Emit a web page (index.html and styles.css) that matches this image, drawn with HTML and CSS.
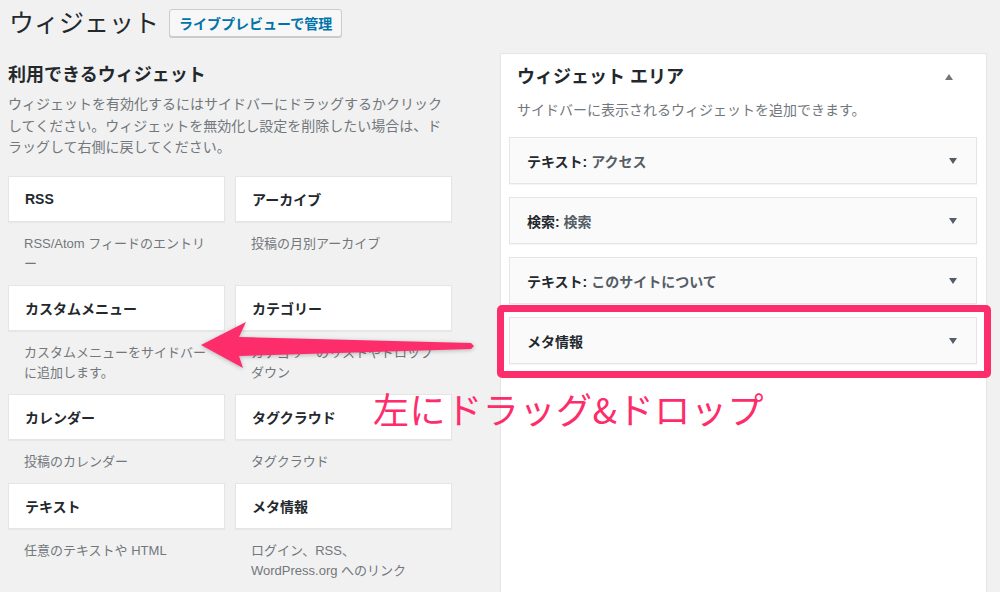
FILE: index.html
```html
<!DOCTYPE html>
<html lang="ja">

<head>
    <meta charset="UTF-8">
    <meta name="viewport" content="width=device-width, initial-scale=1.0">
    <title>ウィジェット</title>
    <link rel="stylesheet" href="styles.css">
</head>

<body>

    <div class="wrap">
        <div class="page-head">
            <h1>ウィジェット</h1>
            <a class="btn" href="#">ライブプレビューで管理</a>
        </div>

        <div class="columns">
            <div class="available">
                <h2>利用できるウィジェット</h2>
                <p class="intro">ウィジェットを有効化するにはサイドバーにドラッグするかクリックしてください。ウィジェットを無効化し設定を削除したい場合は、ドラッグして右側に戻してください。</p>

                <div class="widget-list">
                    <div class="item">
                        <div class="card">RSS</div>
                        <p class="desc">RSS/Atom フィードのエントリー</p>
                    </div>
                    <div class="item">
                        <div class="card">アーカイブ</div>
                        <p class="desc">投稿の月別アーカイブ</p>
                    </div>
                    <div class="item">
                        <div class="card">カスタムメニュー</div>
                        <p class="desc">カスタムメニューをサイドバーに追加します。</p>
                    </div>
                    <div class="item">
                        <div class="card">カテゴリー</div>
                        <p class="desc">カテゴリーのリストやドロップダウン</p>
                    </div>
                    <div class="item">
                        <div class="card">カレンダー</div>
                        <p class="desc">投稿のカレンダー</p>
                    </div>
                    <div class="item">
                        <div class="card">タグクラウド</div>
                        <p class="desc">タグクラウド</p>
                    </div>
                    <div class="item">
                        <div class="card">テキスト</div>
                        <p class="desc">任意のテキストや HTML</p>
                    </div>
                    <div class="item">
                        <div class="card">メタ情報</div>
                        <p class="desc">ログイン、RSS、WordPress.org へのリンク</p>
                    </div>
                </div>
            </div>

            <div class="sidebar">
                <div class="sidebar-head">
                    <h3>ウィジェット エリア</h3>
                    <span class="arrow-up"></span>
                </div>
                <p class="sidebar-desc">サイドバーに表示されるウィジェットを追加できます。</p>

                <div class="area-widget">
                    <span>テキスト: <em>アクセス</em></span>
                    <span class="arrow-down"></span>
                </div>
                <div class="area-widget">
                    <span>検索: <em>検索</em></span>
                    <span class="arrow-down"></span>
                </div>
                <div class="area-widget">
                    <span>テキスト: <em>このサイトについて</em></span>
                    <span class="arrow-down"></span>
                </div>
                <div class="area-widget">
                    <span>メタ情報</span>
                    <span class="arrow-down"></span>
                </div>
            </div>
        </div>
    </div>

    <!-- annotations drawn over the screenshot -->
    <div class="mark-box"></div>
    <svg class="mark-arrow" width="1000" height="592" viewBox="0 0 1000 592">
        <polygon points="201,345 246,322 239,337 471,343 474,346 471,349 239,356 243,368" fill="#fd2d6c" />
    </svg>
    <div class="mark-text">左にドラッグ&amp;ドロップ</div>

</body>

</html>
```

FILE: styles.css
```css
* {
    margin: 0;
    padding: 0;
    box-sizing: border-box;
}

body {
    font-family: 'Liberation Sans', 'Noto Sans CJK JP', sans-serif;
    background: #f1f1f1;
    color: #444;
    overflow: hidden;
    height: 592px;
    position: relative;
}

.wrap {
    padding-left: 8px;
}

.page-head {
    display: flex;
    align-items: center;
    padding-top: 8px;
    height: 37px;
}

.page-head h1 {
    font-size: 25px;
    font-weight: 400;
    color: #23282d;
    line-height: 28px;
    margin-left: 1px;
}

.btn {
    margin-left: 10px;
    height: 28px;
    padding: 0 9px;
    display: inline-flex;
    align-items: center;
    font-size: 14px;
    font-weight: 700;
    color: #0073aa;
    text-decoration: none;
    background: #f7f7f7;
    border: 1px solid #ccc;
    border-radius: 3px;
    box-shadow: 0 1px 0 #ccc;
}

.columns {
    display: flex;
    gap: 48px;
}

.available {
    width: 444px;
    padding-top: 27px;
}

.available h2 {
    font-size: 18px;
    font-weight: 700;
    color: #23282d;
    line-height: 22px;
}

.intro {
    margin-top: 8px;
    font-size: 14px;
    line-height: 21.5px;
    color: #72777c;
}

.widget-list {
    margin-top: 17px;
    display: grid;
    grid-template-columns: 217px 217px;
    column-gap: 10px;
    row-gap: 11px;
}

.card {
    height: 46px;
    display: flex;
    align-items: center;
    padding-left: 16px;
    background: #fff;
    border: 1px solid #e5e5e5;
    box-shadow: 0 1px 1px rgba(0, 0, 0, 0.04);
    font-size: 14px;
    font-weight: 700;
    color: #23282d;
}

.desc {
    margin-top: 12px;
    padding: 0 16px;
    font-size: 13px;
    line-height: 20px;
    color: #72777c;
    line-break: loose;
}

.sidebar {
    width: 487px;
    height: 560px;
    margin-top: 16px;
    background: #fff;
    border: 1px solid #e5e5e5;
    box-shadow: 0 1px 1px rgba(0, 0, 0, 0.04);
    padding: 0 9px 0 8px;
}

.sidebar-head {
    display: flex;
    justify-content: space-between;
    align-items: center;
    padding: 12px 24px 0 8px;
}

.sidebar-head h3 {
    font-size: 18px;
    font-weight: 700;
    color: #23282d;
    line-height: 22px;
}

.sidebar-desc {
    padding-left: 8px;
    margin-top: 12px;
    font-size: 14px;
    line-height: 20px;
    color: #72777c;
}

.area-widget {
    height: 47px;
    margin-top: 13px;
    display: flex;
    justify-content: space-between;
    align-items: center;
    padding: 0 19px 0 17px;
    background: #fafafa;
    border: 1px solid #e5e5e5;
    box-shadow: 0 1px 1px rgba(0, 0, 0, 0.04);
    font-size: 14px;
    font-weight: 700;
    color: #23282d;
}

.sidebar-desc + .area-widget {
    margin-top: 17px;
}

.area-widget em {
    font-style: normal;
    color: #555d66;
}

.arrow-up,
.arrow-down {
    width: 0;
    height: 0;
    border-left: 4px solid transparent;
    border-right: 4px solid transparent;
}

.arrow-up {
    border-bottom: 6px solid #72777c;
}

.arrow-down {
    border-top: 6px solid #555d66;
}

.mark-box {
    position: absolute;
    left: 497px;
    top: 305px;
    width: 494px;
    height: 73px;
    border: 7px solid #fd2d6c;
    border-radius: 5px;
}

.mark-arrow {
    position: absolute;
    left: 0;
    top: 0;
    filter: drop-shadow(0 1px 2px rgba(0, 0, 0, 0.25));
}

.mark-text {
    position: absolute;
    left: 373px;
    top: 386px;
    font-size: 36px;
    letter-spacing: 0.6px;
    line-height: 44px;
    font-family: 'Noto Sans CJK JP', sans-serif;
    color: #fd2d6c;
    white-space: nowrap;
}
```
